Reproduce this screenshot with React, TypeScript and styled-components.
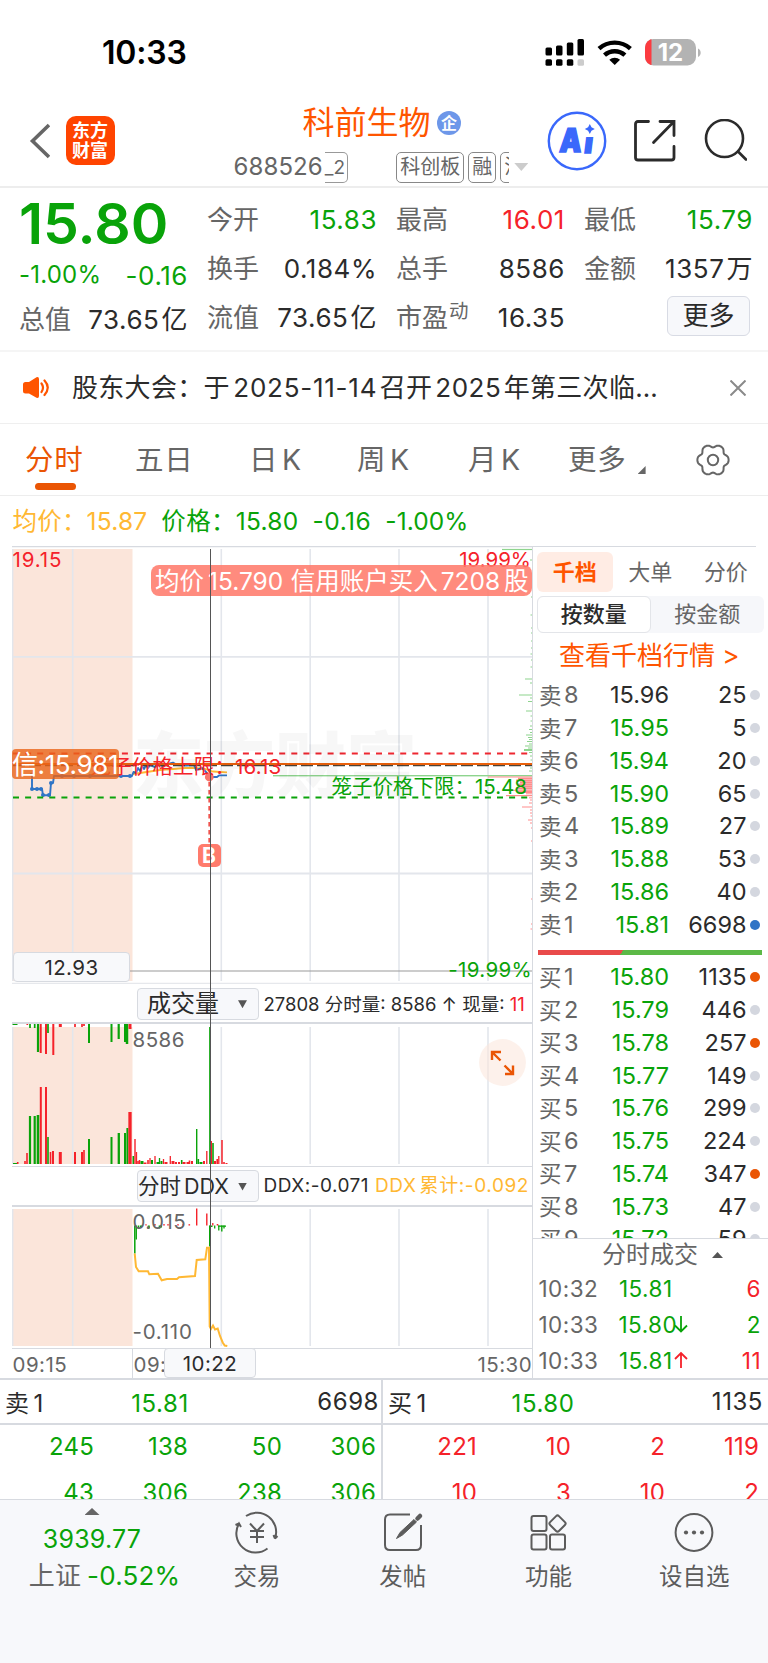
import React from 'react';
import styled, { createGlobalStyle } from 'styled-components';

const GREEN = '#09a309';
const RED = '#f5222a';
const ORANGE = '#ea5504';
const GOLD = '#ffb833';
const GREY = '#666';
const INK = '#2b2b2b';
const LINE = '#d7dae0';

const Global = createGlobalStyle`
  * { box-sizing: border-box; }
  body {
    margin: 0;
    background: #fff;
    font-family: Inter, "Noto Sans CJK SC", sans-serif;
    color: ${INK};
    font-weight: 400;
    line-height: 1.2;
    text-autospace: no-autospace;
  }
  #root { display: flow-root; }
`;

const Screen = styled.div`
  width: 768px;
  height: 1663px;
  display: flex;
  flex-direction: column;
  overflow: hidden;
  background: #fff;
  white-space: nowrap;
`;

const Txt = styled.span<{ $c?: string; $s?: number; $ls?: number; $w?: number; $ml?: number; $mr?: number; $mt?: number; $right?: boolean }>`
  color: ${p => p.$c ?? 'inherit'};
  font-size: ${p => (p.$s ? `${p.$s}px` : 'inherit')};
  letter-spacing: ${p => (p.$ls === undefined ? 'inherit' : `${p.$ls}px`)};
  font-weight: ${p => p.$w ?? 'inherit'};
  margin-left: ${p => p.$ml ?? 0}px;
  margin-right: ${p => p.$mr ?? 0}px;
  margin-top: ${p => p.$mt ?? 0}px;
  text-align: ${p => (p.$right ? 'right' : 'inherit')};
`;

/* ---------- status bar ---------- */
const StatusBar = styled.div`
  height: 95px;
  padding: 10px 67px 0 102px;
  display: flex;
  align-items: center;
  justify-content: space-between;
  color: #000;
  font-size: 32px;
  font-weight: 600;
`;
const Clock = styled.span`
  padding-top: 2px;
  letter-spacing: -0.2px;
`;

/* ---------- header ---------- */
const Header = styled.header`
  height: 93px;
  border-bottom: 2px solid #ededed;
  display: flex;
  align-items: center;
  padding-left: 29px;
`;
const Logo = styled.div`
  width: 49px;
  height: 49px;
  margin-left: 15.5px;
  border-radius: 10px;
  background: #ff4400;
  color: #fff;
  font-weight: 700;
  font-size: 18px;
  line-height: 20px;
  padding-top: 5px;
  text-align: center;
`;
const TitleBlock = styled.div`
  width: 297px;
  margin-left: 119px;
  height: 91px;
`;
const TitleLine = styled.div`
  height: 30px;
  margin-top: 13px;
  padding-left: 69px;
  display: flex;
  align-items: center;
  font-size: 32px;
  color: #ff5500;
`;
const Badge = styled.span`
  width: 24px;
  height: 24px;
  margin-left: 6.5px;
  border-radius: 50%;
  background: #6d97e9;
  color: #fff;
  font-size: 16px;
  font-weight: 700;
  line-height: 24px;
  text-align: center;
`;
const CodeLine = styled.div`
  height: 31px;
  margin-top: 13.5px;
  display: flex;
  align-items: center;
  font-size: 24px;
  color: ${GREY};
`;
const Level = styled.span`
  width: 23px;
  height: 31px;
  margin-left: 2px;
  border: 1.5px solid #999;
  border-left: 0;
  border-radius: 0 5px 5px 0;
  font-size: 19px;
  line-height: 30px;
`;
const Tags = styled.div`
  width: 113px;
  margin-left: 48.5px;
  display: flex;
  gap: 4px;
  overflow: hidden;
`;
const Tag = styled.span`
  flex: none;
  height: 31px;
  padding: 0 3px;
  border: 1.5px solid #888;
  border-radius: 5px;
  font-size: 20px;
  line-height: 29px;
`;
const Mark = styled.i<{ $w: number; $h: number; $c: string; $ml?: number; $up?: boolean }>`
  flex: none;
  width: ${p => p.$w}px;
  height: ${p => p.$h}px;
  margin-left: ${p => p.$ml ?? 0}px;
  background: ${p => p.$c};
  clip-path: ${p => (p.$up ? 'polygon(50% 0, 100% 100%, 0 100%)' : 'polygon(0 0, 100% 0, 50% 100%)')};
`;
const HeaderIcons = styled.div`
  display: flex;
  align-items: center;
  gap: 26px;
  margin-left: 16.5px;
`;

/* ---------- quote ---------- */
const Quote = styled.section`
  height: 164px;
  padding: 7px 16px 0 19px;
  display: grid;
  grid-template-columns: 168px 169px 168px 168px;
  column-gap: 20px;
  border-bottom: 2px solid #f5f5f5;
  font-size: 26px;
`;
const QuoteCol = styled.div`
  display: flex;
  flex-direction: column;
`;
const QuoteCell = styled.div<{ $h?: number }>`
  height: ${p => p.$h ?? 49}px;
  display: flex;
  align-items: center;
  justify-content: space-between;
  > :last-child {
    letter-spacing: 0.55px;
    margin-right: -1px;
  }
`;
const Price = styled.div`
  height: 55px;
  line-height: 57px;
  color: ${GREEN};
  font-size: 57px;
  font-weight: 600;
`;
const Sup = styled.sup`
  margin-left: 1px;
  font-size: 19.5px;
  line-height: 0;
  vertical-align: 9px;
`;
const MoreButton = styled.button`
  width: 83px;
  height: 40px;
  margin: 3px 2px 0 auto;
  padding: 0;
  border: 1.5px solid #d8dbe4;
  border-radius: 6px;
  background: #f7f8fb;
  color: ${INK};
  font: 26px/38px Inter, "Noto Sans CJK SC", sans-serif;
`;

/* ---------- notice ---------- */
const Notice = styled.section`
  height: 72px;
  padding: 0 22px 0 22px;
  display: flex;
  align-items: center;
  border-bottom: 1px solid #efefef;
  font-size: 26px;
`;
const NoticeText = styled.div`
  flex: 1;
  margin-left: 22px;
  letter-spacing: 0.3px;
`;

/* ---------- tabs ---------- */
const Tabs = styled.nav`
  height: 72px;
  display: flex;
  align-items: center;
  padding-left: 25px;
  border-bottom: 1px solid #ededed;
  font-size: 28.5px;
  color: ${GREY};
`;
const Tab = styled.div<{ $w: number; $active?: boolean }>`
  width: ${p => p.$w}px;
  height: 71px;
  line-height: 71px;
  color: ${p => (p.$active ? ORANGE : GREY)};
  position: relative;
  display: flex;
  ${p => p.$active && `
    &::after {
      content: '';
      position: absolute;
      left: 9.5px;
      bottom: 5px;
      width: 41px;
      height: 7px;
      border-radius: 3.5px;
      background: ${ORANGE};
    }
  `}
`;
const Corner = styled.i`
  width: 8px;
  height: 8px;
  margin: 42px 0 0 11px;
  background: ${GREY};
  clip-path: polygon(100% 0, 100% 100%, 0 100%);
`;

const InfoLine = styled.div`
  height: 50px;
  padding: 1.5px 0 0 12.5px;
  display: flex;
  align-items: center;
  font-size: 24.5px;
  color: ${GREEN};
`;

/* ---------- trading area ---------- */
const Trading = styled.main`
  height: 832px;
  display: flex;
  padding-left: 12px;
`;
const Charts = styled.section`
  width: 520px;
  position: relative;
`;
const Panel = styled.div<{ $h: number }>`
  position: relative;
  height: ${p => p.$h}px;
  svg { display: block; }
`;
const Crosshair = styled.div`
  position: absolute;
  left: 197.5px;
  top: 3px;
  width: 1.5px;
  height: 799px;
  background: #555;
`;
const Label = styled.span<{ $x?: number; $r?: number; $y: number; $c: string; $s?: number; $ls?: number }>`
  position: absolute;
  ${p => (p.$r !== undefined ? `right: ${p.$r}px;` : `left: ${p.$x}px;`)}
  top: ${p => p.$y - 12}px;
  line-height: 24px;
  font-size: ${p => p.$s ?? 20}px;
  letter-spacing: ${p => p.$ls ?? 0}px;
  color: ${p => p.$c};
`;
const Watermark = styled.span`
  position: absolute;
  left: 121px;
  top: 179px;
  line-height: 80px;
  font-size: 71px;
  font-weight: 900;
  color: rgba(0, 0, 0, 0.03);
`;
const TradeBubble = styled.div`
  position: absolute;
  left: 139px;
  top: 19px;
  width: 381px;
  height: 31px;
  padding-left: 4px;
  border-radius: 8px;
  background: rgba(255, 122, 107, 0.87);
  color: #fff;
  font-size: 24.5px;
  line-height: 32px;
  display: flex;
`;
const CreditBubble = styled.div`
  position: absolute;
  left: 0;
  top: 203px;
  width: 107px;
  height: 30px;
  border-radius: 4px;
  background: rgba(234, 100, 24, 0.8);
  color: #fff;
  font-size: 26px;
  line-height: 31px;
  letter-spacing: -0.4px;
`;
const AxisBox = styled.div<{ $x: number; $y: number; $w: number; $h: number }>`
  position: absolute;
  left: ${p => p.$x}px;
  top: ${p => p.$y}px;
  width: ${p => p.$w}px;
  height: ${p => p.$h}px;
  border: 1.5px solid ${LINE};
  border-radius: 4px;
  background: #f8f9fb;
  color: ${INK};
  font-size: 20.5px;
  letter-spacing: 0.45px;
  line-height: ${p => p.$h - 1}px;
  text-align: center;
`;
const BuyMark = styled.div`
  position: absolute;
  left: 185.5px;
  top: 298px;
  width: 23px;
  height: 23px;
  border-radius: 5px;
  background: #ff7b6c;
  color: #fff;
  font-size: 21px;
  font-weight: 700;
  line-height: 23px;
  text-align: center;
`;
const PanelHead = styled.div<{ $h: number; $ruled?: boolean }>`
  height: ${p => p.$h}px;
  padding: ${p => (p.$ruled ? 0 : 1.5)}px 0 0 125px;
  display: flex;
  align-items: center;
  border-top: ${p => (p.$ruled ? `1.5px solid ${LINE}` : '0')};
  border-bottom: 2px solid ${LINE};
  font-size: 18.5px;
`;
const Picker = styled.div<{ $s: number; $pl: number }>`
  width: 122px;
  height: 32px;
  margin-right: 4.5px;
  padding: 1px 11px 0 ${p => p.$pl}px;
  display: flex;
  align-items: center;
  justify-content: space-between;
  border: 1.5px solid ${LINE};
  border-radius: 4px;
  background: #f7f8fb;
  font-size: ${p => p.$s}px;
`;
const Expand = styled.div`
  position: absolute;
  right: 6px;
  top: 14.5px;
`;
const Axis = styled.div`
  position: relative;
  height: 30px;
  border-top: 1.5px solid ${LINE};
  display: flex;
  align-items: center;
  font-size: 20.5px;
  letter-spacing: 0.45px;
  color: ${GREY};
`;
const AxisPart = styled.span<{ $w: number; $divider?: boolean }>`
  width: ${p => p.$w}px;
  height: 29px;
  padding-left: 0.5px;
  line-height: 31px;
  border-right: ${p => (p.$divider ? `1px solid ${LINE}` : '0')};
`;

/* ---------- order book ---------- */
const Book = styled.aside`
  width: 236px;
  border-left: 1.5px solid ${LINE};
  display: flex;
  flex-direction: column;
  > * { flex: none; }
`;
const BookTabs = styled.div`
  height: 50px;
  padding: 5px 0 4px 4px;
  border-top: 1.5px solid ${LINE};
  margin-right: 12px;
  display: flex;
  font-size: 22px;
  color: ${GREY};
`;
const BookTab = styled.div<{ $active?: boolean }>`
  flex: none;
  width: 75.5px;
  line-height: 40px;
  text-align: center;
  border-radius: 6px;
  ${p => p.$active && 'background: #ffece4; color: #ff5500; font-weight: 600;'}
`;
const Segments = styled.div`
  width: 227px;
  height: 37px;
  margin-left: 3.5px;
  display: flex;
  border-radius: 6px;
  background: #f6f7fa;
  font-size: 22px;
  color: ${GREY};
`;
const Segment = styled.div<{ $active?: boolean }>`
  flex: 1;
  line-height: 37px;
  text-align: center;
  ${p => p.$active && `
    background: #fff;
    border: 1.5px solid #e3e5e9;
    border-radius: 6px;
    color: ${INK};
    font-weight: 500;
    line-height: 35px;
  `}
`;
const DepthLink = styled.div`
  height: 46px;
  padding-left: 26px;
  font-size: 26px;
  line-height: 46px;
  color: #ff5500;
`;
const Orders = styled.div`
  height: 558.5px;
  overflow: hidden;
`;
const Order = styled.div`
  height: 32.75px;
  padding: 0 8px 0 6px;
  display: grid;
  grid-template-columns: 56px 74px 1fr 14px;
  align-items: center;
  font-size: 23.5px;
  text-align: right;
`;
const Side = styled.span`
  color: ${GREY};
  text-align: left;
  font-size: 22.5px;
  display: flex;
  gap: 2.5px;
  align-items: center;
`;
const Dot = styled.i<{ $c: string }>`
  width: 10px;
  height: 10px;
  border-radius: 50%;
  background: ${p => p.$c};
  justify-self: end;
`;
const Ratio = styled.div`
  height: 5.5px;
  margin: 8.5px 6px 6px 4.5px;
  background: linear-gradient(120deg, #e94a4a 37.5%, #5cb947 37.5%);
`;
const TradesHead = styled.div`
  height: 32.5px;
  border-top: 1.5px solid ${LINE};
  padding: 1.5px 0 0 69px;
  display: flex;
  align-items: center;
  font-size: 24px;
  color: ${GREY};
`;
const Trade = styled.div`
  height: 36px;
  padding: 0 7px 0 5.5px;
  display: grid;
  grid-template-columns: 80px 54px 16px 1fr;
  align-items: center;
  font-size: 22.5px;
  letter-spacing: 0.45px;
  svg { display: block; }
`;

/* ---------- queue table ---------- */
const Queues = styled.section`
  height: 121px;
  display: grid;
  grid-template-columns: 383px 385px;
  border-top: 2px solid ${LINE};
  overflow: hidden;
`;
const Queue = styled.div<{ $left?: boolean }>`
  border-right: ${p => (p.$left ? `2px solid ${LINE}` : '0')};
`;
const QueueHead = styled.div<{ $left?: boolean }>`
  height: 45px;
  padding: 2px ${p => (p.$left ? 2 : 5)}px 0 5px;
  border-bottom: 2px solid ${LINE};
  display: grid;
  grid-template-columns: 96px 118px 1fr;
  align-items: center;
  justify-items: center;
  font-size: 24px;
  letter-spacing: 0.55px;
  > :first-child { justify-self: start; }
  > :last-child { justify-self: end; }
`;
const QueueRow = styled.div<{ $c: string; $left?: boolean }>`
  height: 45.3px;
  display: grid;
  grid-template-columns: 94px 94px 94px 94px;
  align-items: center;
  text-align: right;
  font-size: 24px;
  letter-spacing: 0.2px;
  color: ${p => p.$c};
`;

/* ---------- bottom bar ---------- */
const BottomBar = styled.footer`
  flex: 1;
  border-top: 1.5px solid ${LINE};
  background: #f7f8fb;
  display: flex;
`;
const IndexBox = styled.div`
  width: 184px;
  padding-top: 8px;
  display: flex;
  flex-direction: column;
  align-items: center;
`;
const IndexLine = styled.div<{ $h: number; $s: number; $indent?: number }>`
  height: ${p => p.$h}px;
  margin-left: ${p => p.$indent ?? 0}px;
  display: flex;
  align-items: center;
  font-size: ${p => p.$s}px;
  letter-spacing: 0.2px;
  color: ${GREEN};
`;
const NavItem = styled.div`
  width: 145.8px;
  padding-top: 8.5px;
  display: flex;
  flex-direction: column;
  align-items: center;
  font-size: 23.5px;
  color: #5c5c5c;
`;
const NavLabel = styled.span`
  height: 36px;
  margin-top: 4px;
  line-height: 36px;
`;

const gear = (() => {
  const pts: string[] = [];
  for (let i = 0; i < 120; i++) {
    const t = (i / 120) * Math.PI * 2;
    const r = 14.4 + 1.5 * Math.cos(6 * t) + 0.3 * Math.cos(12 * t + Math.PI);
    pts.push(`${(17 + r * Math.cos(t)).toFixed(2)} ${(17 + r * Math.sin(t)).toFixed(2)}`);
  }
  return `M${pts.join('L')}Z`;
})();

type Bar = [x: number, h: number, c: 'r' | 'g', w?: number];
const auctionTop: Bar[] = [
  [15, 1, 'g', 5], [27.3, 1, 'r'], [30, 4, 'g'], [34.7, 4, 'g'], [38, 28, 'g', 2.2], [40.7, 29, 'r', 2], [46, 30, 'r', 2],
  [48, 9, 'g'], [53.3, 31, 'r', 2], [60.3, 3, 'r', 3], [75, 3, 'r'], [82, 3, 'r'], [84, 2, 'r'], [89, 19, 'g', 2],
  [111.5, 18, 'g', 2], [118.7, 15, 'g', 2.2], [125, 18, 'g', 2], [127, 20, 'g', 2.5], [130, 5, 'r', 3],
];
const volume: Bar[] = [
  [15, 1, 'g', 4], [17.7, 2, 'r'], [25, 3, 'r'], [27, 11, 'r'], [30, 48, 'g', 2.2], [34.7, 48, 'g', 2.2], [38, 49, 'g', 2.6],
  [40.8, 77, 'r', 2], [46, 77, 'r', 2], [48, 27, 'g'], [50.5, 12, 'r'], [53, 13, 'r', 2], [60.3, 12, 'r', 3],
  [75, 12, 'r', 2], [82, 12, 'r', 2], [84, 14, 'r'], [89, 25, 'g', 2], [111.5, 27, 'g', 2], [118.8, 31, 'g', 2.3],
  [125, 31, 'g', 2], [127.4, 36, 'g', 2], [130, 52, 'r', 3.3], [133.3, 8, 'g'], [135, 25, 'r', 1.4], [136.5, 12, 'r', 1.3],
  [138, 3, 'r'], [139.5, 4, 'r'], [142, 3, 'g', 3], [145, 1.5, 'r', 3], [148, 4, 'r'], [150, 6, 'r', 1.3], [152, 4, 'g', 2],
  [155, 8, 'r', 1.3], [158, 2, 'g', 3], [159.5, 6, 'g', 1.3], [161.5, 3, 'g', 2], [163.5, 5, 'r', 1.3], [166, 2, 'r', 3],
  [170.3, 8, 'r', 1.3], [173, 3, 'r', 3], [176, 2, 'r', 2], [179, 2, 'r', 2], [181.7, 4, 'g'], [184, 2, 'r', 3], [188, 2, 'r', 3],
  [189.5, 3.5, 'r'], [192, 3, 'r', 2], [196.7, 35, 'g', 1.4], [198.3, 5, 'g'], [201, 2, 'g', 3], [204, 3, 'r', 2],
  [206.8, 13, 'r', 1.3], [209.6, 137, 'g', 0.9], [211.3, 23, 'r', 1.4], [213, 21, 'g', 1.6], [215, 3, 'r', 2], [217.2, 5, 'r'],
  [218.8, 8, 'r', 1.3], [222, 24, 'r', 1.5], [224, 2, 'r'], [226.5, 1, 'r', 2],
];
const ddxBars: Bar[] = [
  [134.8, -28, 'g', 1.5], [136.3, -14, 'g', 1.3], [138.5, -3, 'g'], [141, -1.5, 'g', 2], [146, 1.3, 'r', 1.3], [148.8, -3, 'g', 2],
  [155, 1.3, 'r'], [159.5, -3, 'g'], [161, -2, 'g', 2], [164, 1.3, 'r'], [168, 1.3, 'r'], [178, 1.3, 'r'], [183, 1.3, 'r'], [189.3, 1.3, 'r'],
  [196.7, 17, 'r', 1.4], [206.8, 12, 'r', 1.4], [209.5, -21, 'g', 1], [211, -1.5, 'g', 3], [212.8, 2.5, 'r', 1.3], [214.7, -3, 'g', 1.3],
  [217.5, 1.5, 'r'], [218.8, -5, 'g', 1.3], [221.8, -6, 'g', 1.4], [224, -3, 'g', 1.3], [222, -1.3, 'g', 8],
];
const tone = (c: 'r' | 'g') => (c === 'r' ? RED : GREEN);

const depth: Bar[] = [
  [549.5, 30, 'g', 1.2], [560, 2, 'g'], [597, 1, 'g'], [615, 1.5, 'g'], [628, 1, 'g'], [633, 1, 'g'], [641, 1, 'g'], [648, 1, 'g'],
  [654, 1.5, 'g'], [660, 1, 'g'], [667, 1.5, 'g'], [679, 7, 'g'], [683, 2, 'g'], [695, 13, 'g'], [698, 2, 'g'], [701.5, 4, 'g'],
  [711, 6, 'g'], [716, 1.5, 'g'], [721, 1.5, 'g'], [726, 2, 'g'], [729.5, 3, 'g'], [732.5, 2, 'g'], [735, 6, 'g'], [737.5, 4, 'g'],
  [739.5, 3, 'g'], [741.5, 5, 'g'], [744, 3, 'g'], [746, 7, 'g'], [748, 4, 'g'], [750, 8, 'g', 2], [752.5, 3, 'g'], [756, 2, 'g'],
  [760, 1.5, 'g'], [764, 2, 'g'], [768, 2, 'g'], [771, 3, 'g'], [775.7, 259, 'g', 1.4],
  [777, 44, 'r', 1], [778.5, 14, 'r', 1.6], [780.5, 16, 'r', 2], [782.5, 12, 'r', 2], [784.5, 15, 'r', 2], [786.5, 13, 'r', 2],
  [788.5, 16, 'r', 2], [790.3, 28, 'r', 1], [792, 14, 'r', 2], [793.8, 6, 'r'], [795.6, 26, 'r', 1.2], [797.8, 3, 'r'], [800, 2, 'r'],
  [803, 3, 'r'], [807, 10, 'r'], [810, 2, 'r'], [813, 2, 'r'], [816, 1.5, 'r'], [820, 4, 'r'], [823, 2, 'r'], [828, 1, 'r'],
  [841, 1, 'r'], [899, 1, 'r'], [924, 1, 'r'], [929, 1.5, 'r'],
];

const Grid = ({ top, bottom }: { top: number; bottom: number }) => (
  <g>
    <rect x="12" y={top} width="120.5" height={bottom - top} fill="#fbe5da" />
    {[12.6, 72.7, 221.3, 310.2, 399, 488].map(x => (
      <line key={x} x1={x} x2={x} y1={top} y2={bottom} stroke="#e3e6ec" strokeWidth="1.6" />
    ))}
  </g>
);

const PriceChart = () => (
  <svg width="520" height="438" viewBox="12 546 520 438">
    <Grid top={549} bottom={981} />
    <path d="M12 546.5H532" stroke="#d7dae0" strokeWidth="1.5" />
    <path d="M12 656.8H532M12 873.5H532" stroke="#e3e6ec" strokeWidth="1.8" />
    <path d="M12 983.5H532" stroke="#e6e8ec" strokeWidth="1.5" />
    <path d="M130 971H532" stroke="#999" strokeWidth="1.2" />
    {depth.map(([y, len, c, w], i) => (
      <rect key={i} x={532 - len} y={y - (w ?? 1) / 2} width={len} height={w ?? 1} fill={c === 'r' ? '#ff8d8d' : '#8ed48e'} />
    ))}
    <path d="M132 774L140 773L150 771.5L160 770L173 769L185 768L195 768L205 769L213 771.5L227 772.4" fill="none" stroke="#ffb833" strokeWidth="1.8" />
    <path
      d="M30.7 773L32 776V789H42L43 795.3H50L51 783H53L54 776H132L133.5 772L136 773L138 768L140 771L142 766L144 769L146 765L148 768L150 765L155 767L158 764L162 766L168 764L173 762.6L177 765L186 765.5L194 765L196 770L202 768L207 773L210 777L217 777L219 775.4H227"
      fill="none" stroke="#2f74c6" strokeWidth="1.9" strokeLinejoin="round"
    />
    {[[32, 789], [37, 789], [41, 789], [43, 795], [49, 795], [51, 783], [62, 776], [74, 776], [90, 776], [121, 776], [130, 776]].map(([x, y]) => (
      <circle key={x} cx={x} cy={y} r="2" fill="#2f74c6" />
    ))}
    <path d="M13 753.6H532" stroke="#ee2730" strokeWidth="2" strokeDasharray="6 6.1" />
    <path d="M13 797.6H532" stroke="#0ba30b" strokeWidth="2" strokeDasharray="6 6.1" />
    <path d="M13 765.4H532" stroke="#4b4339" strokeWidth="1.6" strokeDasharray="12 4" />
    <path d="M13 764H532" stroke="#e9600c" strokeWidth="2.2" />
    <path d="M209.3 782V845" stroke="#f0554f" strokeWidth="1.9" strokeDasharray="4.5 3.5" />
    <circle cx="209.3" cy="777" r="4.4" fill="#f8736b" />
  </svg>
);

const VolumeChart = () => (
  <svg width="520" height="142" viewBox="12 1024 520 142">
    <Grid top={1027} bottom={1164} />
    {auctionTop.map(([x, h, c, w = 1.7], i) => <rect key={i} x={x - w / 2} y="1024" width={w} height={h} fill={tone(c)} />)}
    {volume.map(([x, h, c, w = 1.6], i) => <rect key={i} x={x - w / 2} y={1164 - h} width={w} height={h} fill={tone(c)} />)}
  </svg>
);

const DdxChart = () => (
  <svg width="520" height="141" viewBox="12 1207 520 141">
    <Grid top={1209} bottom={1346} />
    {ddxBars.map(([x, h, c, w = 1.6], i) => (
      <rect key={i} x={x - w / 2} y={h > 0 ? 1225.5 - h : 1225.5} width={w} height={Math.abs(h)} fill={tone(c)} />
    ))}
    <path
      d="M134.7 1253.5L136 1267L138.7 1271.3H148L149.3 1274.3L158 1273.7L161.7 1280.3L167 1279H177L179 1277.3L195 1276L196.7 1260L205.3 1259.3L207 1247.7H209L209.7 1326.5L211 1329L213 1325.5L215 1329.5L217.7 1328.5L220 1336L222.7 1342.5L224.7 1345.5L227.3 1346"
      fill="none" stroke="#ffb833" strokeWidth="2"
    />
  </svg>
);

const asks: [number, string, string][] = [
  [8, '15.96', '25'], [7, '15.95', '5'], [6, '15.94', '20'], [5, '15.90', '65'],
  [4, '15.89', '27'], [3, '15.88', '53'], [2, '15.86', '40'], [1, '15.81', '6698'],
];
const bids: [number, string, string][] = [
  [1, '15.80', '1135'], [2, '15.79', '446'], [3, '15.78', '257'], [4, '15.77', '149'], [5, '15.76', '299'],
  [6, '15.75', '224'], [7, '15.74', '347'], [8, '15.73', '47'], [9, '15.72', '59'],
];
const OrderRow = ({ side, n, price, qty }: { side: string; n: number; price: string; qty: string }) => {
  const dot = qty === '6698' ? '#2f74c6' : side === '买' && [1, 3, 7].includes(n) ? ORANGE : '#d4d7df';
  return (
    <Order>
      <Side>{side}<Txt $s={23.5}>{n}</Txt></Side>
      <Txt $c={price === '15.96' ? INK : GREEN}>{price}</Txt>
      <Txt $mr={-0.5}>{qty}</Txt>
      <Dot $c={dot} />
    </Order>
  );
};

const trades: [string, string, string, string, number][] = [
  ['10:32', '15.81', '6', RED, 0],
  ['10:33', '15.80', '2', GREEN, -1],
  ['10:33', '15.81', '11', RED, 1],
];

export default function App() {
  return (
    <>
      <Global />
      <Screen>
        <StatusBar>
          <Clock>10:33</Clock>
          <svg width="156" height="28" viewBox="545 38 156 28">
            <rect x="545.5" y="46.5" width="6.5" height="8" rx="1.5" />
            <rect x="556" y="44.5" width="6.5" height="10" rx="1.5" />
            <rect x="566.8" y="41.5" width="6.5" height="13" rx="1.5" />
            <rect x="577.5" y="38" width="6.5" height="16.5" rx="1.5" />
            <rect x="545.5" y="58.3" width="6.5" height="6.5" rx="1.5" />
            <rect x="556" y="58.3" width="6.5" height="6.5" rx="1.5" />
            <rect x="566.8" y="58.3" width="6.5" height="6.5" rx="1.5" />
            <rect x="577.5" y="58.3" width="6.5" height="6.5" rx="1.5" fill="#ccc" />
            <g fill="none" stroke="#000" strokeWidth="4.4">
              <path d="M599 47.6a23.5 23.5 0 0 1 31.4 0" />
              <path d="M604.5 54.2a15 15 0 0 1 20.4 0" />
            </g>
            <path d="M609.3 58.8a8 8 0 0 1 10.8 0L614.7 64z" />
            <clipPath id="cell"><rect x="645" y="38" width="51" height="26.5" rx="8.5" /></clipPath>
            <g clipPath="url(#cell)">
              <rect x="645" y="38" width="51" height="27" fill="#b3b3b3" />
              <rect x="645" y="38" width="6.5" height="27" fill="#fc3b40" />
            </g>
            <path d="M698 47.5c3.6 1.6 3.6 7 0 8.600z" fill="#b3b3b3" />
            <text x="670.5" y="60" fontSize="24" fontWeight="700" fill="#fff" textAnchor="middle">12</text>
          </svg>
        </StatusBar>

        <Header>
          <svg width="21" height="38" viewBox="0 0 21 38" fill="none" stroke="#666" strokeWidth="3.6">
            <path d="M20 3L3.5 19L20 35" />
          </svg>
          <Logo>东方<br />财富</Logo>
          <TitleBlock>
            <TitleLine>科前生物<Badge>企</Badge></TitleLine>
            <CodeLine>
              <Txt $ls={0.1}>688526</Txt>
              <Level>_2</Level>
              <Tags><Tag>科创板</Tag><Tag>融</Tag><Tag>沪</Tag></Tags>
              <Mark $w={14} $h={8} $c="#ccc" $ml={5} />
            </CodeLine>
          </TitleBlock>
          <HeaderIcons>
            <svg width="60" height="60" viewBox="0 0 60 60">
              <circle cx="30" cy="30" r="28.2" fill="#fff" stroke="#3a68fb" strokeWidth="2.4" />
              <g fill="#3a68fb" stroke="#3a68fb" strokeWidth="1.6" fontWeight="900">
                <text x="0" y="0" fontSize="32.5" textLength="22" lengthAdjust="spacingAndGlyphs" transform="translate(12 41) skewX(-4)">A</text>
                <text x="0" y="0" fontSize="28" transform="translate(36.5 42) skewX(-7)">ı</text>
              </g>
              <path d="M42.8 13L44.5 16.3L47.8 18L44.5 19.7L42.8 23L41.1 19.7L37.8 18L41.1 16.3Z" fill="#3a68fb" />
            </svg>
            <svg width="44" height="44" viewBox="0 0 44 44" fill="none" stroke="#2b2b2b" strokeWidth="2.8" strokeLinecap="round">
              <path d="M15.5 2.5H5Q2.5 2.5 2.5 5V38.5Q2.5 41 5 41H38.5Q41 41 41 38.5V27.5" />
              <path d="M27 2.5H41V16.5M40 3.5L20.5 23.5" />
            </svg>
            <svg width="44" height="44" viewBox="0 0 44 44" fill="none" stroke="#2b2b2b" strokeWidth="2.6" strokeLinecap="round">
              <circle cx="21.5" cy="19.5" r="18.5" />
              <path d="M35 32.5L43 40.5" />
            </svg>
          </HeaderIcons>
        </Header>

        <Quote>
          <QuoteCol>
            <Price>15.80</Price>
            <QuoteCell $h={51}><Txt $c={GREEN} $s={24} $ls={0.2}>-1.00%</Txt><Txt $c={GREEN} $s={26}>-0.16</Txt></QuoteCell>
            <QuoteCell $h={37}><Txt $c={GREY}>总值</Txt><span>73.65<Txt $ml={2}>亿</Txt></span></QuoteCell>
          </QuoteCol>
          <QuoteCol>
            <QuoteCell><Txt $c={GREY}>今开</Txt><Txt $c={GREEN}>15.83</Txt></QuoteCell>
            <QuoteCell><Txt $c={GREY}>换手</Txt><Txt>0.184%</Txt></QuoteCell>
            <QuoteCell><Txt $c={GREY}>流值</Txt><span>73.65<Txt $ml={2}>亿</Txt></span></QuoteCell>
          </QuoteCol>
          <QuoteCol>
            <QuoteCell><Txt $c={GREY}>最高</Txt><Txt $c={RED}>16.01</Txt></QuoteCell>
            <QuoteCell><Txt $c={GREY}>总手</Txt><Txt>8586</Txt></QuoteCell>
            <QuoteCell><Txt $c={GREY}>市盈<Sup>动</Sup></Txt><Txt>16.35</Txt></QuoteCell>
          </QuoteCol>
          <QuoteCol>
            <QuoteCell><Txt $c={GREY}>最低</Txt><Txt $c={GREEN}>15.79</Txt></QuoteCell>
            <QuoteCell><Txt $c={GREY}>金额</Txt><span>1357<Txt $ml={2}>万</Txt></span></QuoteCell>
            <MoreButton>更多</MoreButton>
          </QuoteCol>
        </Quote>

        <Notice>
          <svg width="28" height="24" viewBox="0 0 28 24">
            <path d="M1 8.5Q1 6 3.5 6H7L14.5 1.2Q17 0.5 17 3V20Q17 22.5 14.5 21.8L7 17.5H3.5Q1 17.5 1 15Z" fill="#ff5500" />
            <path d="M19.5 7.5Q22.5 11.5 19.5 16M22.5 4.5Q29 11.5 22.5 19" fill="none" stroke="#ff5500" strokeWidth="2.2" strokeLinecap="round" />
          </svg>
          <NoticeText>
            股东大会：于<Txt $ml={3.5} $mr={2.5} $ls={0.75}>2025-11-14</Txt>召开<Txt $ml={3} $mr={2.5} $ls={0.5}>2025</Txt>年第三次临…
          </NoticeText>
          <svg width="16" height="16" viewBox="0 0 16 16" stroke="#8a8a8a" strokeWidth="2"><path d="M0.5 0.5L15.5 15.5M15.5 0.5L0.5 15.5" /></svg>
        </Notice>

        <Tabs>
          <Tab $w={110} $active><Txt $ls={0.8}>分时</Txt></Tab>
          <Tab $w={114}><Txt $ls={0.8}>五日</Txt></Tab>
          <Tab $w={108}>日<Txt $ml={4.5}>K</Txt></Tab>
          <Tab $w={111}>周<Txt $ml={4.5}>K</Txt></Tab>
          <Tab $w={100}>月<Txt $ml={4.5}>K</Txt></Tab>
          <Tab $w={127.5}><Txt $ls={0.8}>更多</Txt><Corner /></Tab>
          <svg width="34" height="34" viewBox="0 0 34 34" fill="none" stroke="#666" strokeWidth="2"><path d={gear} /><circle cx="17" cy="17" r="5.2" /></svg>
        </Tabs>

        <InfoLine>
          <Txt $c={GOLD} $ls={0.2}>均价：15.87</Txt>
          <Txt $ml={14} $ls={0.3}>价格：15.80</Txt>
          <Txt $ml={14} $ls={0.5}>-0.16</Txt>
          <Txt $ml={14} $ls={0.1}>-1.00%</Txt>
        </InfoLine>

        <Trading>
          <Charts>
            <Panel $h={438}>
              <PriceChart />
              <Watermark>东方财富</Watermark>
              <Label $x={78.5} $y={221} $c={RED} $s={20.5} $ls={0.15}>笼子价格上限：16.13</Label>
              <Label $r={5} $y={241} $c={GREEN} $s={20.5}>笼子价格下限：15.48</Label>
              <CreditBubble>信:15.981</CreditBubble>
              <Label $x={0.5} $y={14} $c={RED} $s={20.5} $ls={0.9}>19.15</Label>
              <Label $r={1} $y={14} $c={RED} $s={20.5}>19.99%</Label>
              <Label $r={0} $y={424} $c={GREEN} $s={20.5} $ls={0.35}>-19.99%</Label>
              <TradeBubble>均价<Txt $ml={4}>15.790</Txt><Txt $ml={7.5}>信用账户买入</Txt><Txt $ml={3} $mr={4}>7208</Txt>股</TradeBubble>
              <BuyMark>B</BuyMark>
              <AxisBox $x={1} $y={405.5} $w={117} $h={30}>12.93</AxisBox>
            </Panel>
            <PanelHead $h={40}>
              <Picker $s={24} $pl={9}>成交量<Mark $w={9} $h={8} $c="#555" /></Picker>
              <span>27808 分时量: 8586 ↑ 现量: <Txt $c={RED}>11</Txt></span>
            </PanelHead>
            <Panel $h={142}>
              <VolumeChart />
              <Label $x={120.5} $y={16} $c={GREY} $s={20.5} $ls={0.45}>8586</Label>
              <Expand>
                <svg width="47" height="47" viewBox="0 0 47 47" fill="none" stroke="#ea5504" strokeWidth="2.4">
                  <circle cx="23.5" cy="23.5" r="23.4" fill="#fbe5da" fillOpacity="0.55" stroke="none" />
                  <path d="M13 21V13H22M13 13L21.5 21.5M26 35H34V26.5M34 35L25.5 26.5" />
                </svg>
              </Expand>
            </Panel>
            <PanelHead $h={41} $ruled>
              <Picker $s={21.5} $pl={0}><span>分时<Txt $ml={3}>DDX</Txt></span><Mark $w={9} $h={8} $c="#555" /></Picker>
              <Txt $mt={1.5} $s={19} $ls={0.5}>DDX:-0.071</Txt>
              <Txt $mt={1.5} $c={GOLD} $ml={6} $s={19} $ls={0.6}>DDX<Txt $ml={3}>累计:-0.092</Txt></Txt>
            </PanelHead>
            <Panel $h={141}>
              <DdxChart />
              <Label $x={120.5} $y={14.5} $c={GREY} $s={20.5} $ls={0.4}>0.015</Label>
              <Label $x={120.5} $y={125} $c={GREY} $s={20.5} $ls={0.75}>-0.110</Label>
            </Panel>
            <Axis>
              <AxisPart $w={121} $divider>09:15</AxisPart>
              <AxisPart $w={344}>09:30</AxisPart>
              <AxisPart $w={55}>15:30</AxisPart>
              <AxisBox $x={152} $y={-1} $w={92} $h={30}>10:22</AxisBox>
            </Axis>
            <Crosshair />
          </Charts>

          <Book>
            <BookTabs>
              <BookTab $active>千档</BookTab>
              <BookTab>大单</BookTab>
              <BookTab>分价</BookTab>
            </BookTabs>
            <Segments>
              <Segment $active>按数量</Segment>
              <Segment>按金额</Segment>
            </Segments>
            <DepthLink>查看千档行情 &gt;</DepthLink>
            <Orders>
              {asks.map(([n, p, q]) => <OrderRow key={n} side="卖" n={n} price={p} qty={q} />)}
              <Ratio />
              {bids.map(([n, p, q]) => <OrderRow key={n} side="买" n={n} price={p} qty={q} />)}
            </Orders>
            <TradesHead>分时成交<Mark $w={11} $h={6} $c="#555" $ml={14} $up /></TradesHead>
            {trades.map(([t, p, q, c, dir], i) => (
              <Trade key={i}>
                <Txt $c={GREY}>{t}</Txt>
                <Txt $c={GREEN} $right>{p}</Txt>
                {dir === 0 ? <span /> : (
                  <svg width="16" height="18" viewBox="0 0 16 18" fill="none" stroke={c} strokeWidth="1.8">
                    <path d={dir < 0 ? 'M8 1V16.5M2 10.5L8 16.5L14 10.5' : 'M8 17V2M2 8L8 2L14 8'} />
                  </svg>
                )}
                <Txt $c={c} $right>{q}</Txt>
              </Trade>
            ))}
          </Book>
        </Trading>

        <Queues>
          <Queue $left>
            <QueueHead $left>
              <Txt $mt={3}>卖<Txt $ml={4}>1</Txt></Txt><Txt $mt={3} $c={GREEN}>15.81</Txt><Txt>6698</Txt>
            </QueueHead>
            <QueueRow $left $c={GREEN}><span>245</span><span>138</span><span>50</span><span>306</span></QueueRow>
            <QueueRow $left $c={GREEN}><span>43</span><span>306</span><span>238</span><span>306</span></QueueRow>
          </Queue>
          <Queue>
            <QueueHead>
              <Txt $mt={3}>买<Txt $ml={4}>1</Txt></Txt><Txt $mt={3} $c={GREEN}>15.80</Txt><Txt>1135</Txt>
            </QueueHead>
            <QueueRow $c={RED}><span>221</span><span>10</span><span>2</span><span>119</span></QueueRow>
            <QueueRow $c={RED}><span>10</span><span>3</span><span>10</span><span>2</span></QueueRow>
          </Queue>
        </Queues>

        <BottomBar>
          <IndexBox>
            <Mark $w={15} $h={7} $c="#666" $up />
            <IndexLine $h={48} $s={25}>3939.77</IndexLine>
            <IndexLine $h={25} $s={26} $indent={25}><Txt $c={GREY} $mr={6}>上证</Txt>-0.52%</IndexLine>
          </IndexBox>
          <NavItem>
            <svg width="46" height="46" viewBox="0 0 46 46" fill="none" stroke="#5c5c5c" strokeWidth="2">
              <path d="M12 7A19.3 19.3 0 0 1 41 29.5L43.5 27M41 29.5L39.5 26M33.5 39.5A19.3 19.3 0 0 1 5 14.5L7 18M5 14.5L1.5 16" />
              <path d="M16 14.5L23 22L30 14.5M23 22V34M16 22H30M16 28H30" />
            </svg>
            <NavLabel>交易</NavLabel>
          </NavItem>
          <NavItem>
            <svg width="46" height="46" viewBox="0 0 46 46" fill="none" stroke="#5c5c5c" strokeWidth="2">
              <path d="M30 5.5H10Q5 5.5 5 10.5V36Q5 41 10 41H36Q41 41 41 36V16" />
              <path d="M16.5 29.5L20 23.5L34 10.5L36.5 13L22.5 26Z" fill="#5c5c5c" strokeWidth="1" />
              <path d="M37.5 9.5L40 7" strokeWidth="4.5" strokeLinecap="round" />
            </svg>
            <NavLabel>发帖</NavLabel>
          </NavItem>
          <NavItem>
            <svg width="46" height="46" viewBox="0 0 46 46" fill="none" stroke="#5c5c5c" strokeWidth="2">
              <rect x="6.5" y="7" width="15" height="15" rx="2" />
              <rect x="6.5" y="25.5" width="15" height="15" rx="2" />
              <rect x="25" y="25.5" width="15" height="15" rx="2" />
              <rect x="26.3" y="8.3" width="12.5" height="12.5" rx="2" transform="rotate(45 32.55 14.5)" />
            </svg>
            <NavLabel>功能</NavLabel>
          </NavItem>
          <NavItem>
            <svg width="46" height="46" viewBox="0 0 46 46" fill="none" stroke="#5c5c5c" strokeWidth="2">
              <circle cx="23" cy="23.5" r="18.4" />
              <g fill="#5c5c5c" stroke="none"><circle cx="15" cy="23.5" r="2.1" /><circle cx="23" cy="23.5" r="2.1" /><circle cx="31" cy="23.5" r="2.1" /></g>
            </svg>
            <NavLabel>设自选</NavLabel>
          </NavItem>
        </BottomBar>
      </Screen>
    </>
  );
}
